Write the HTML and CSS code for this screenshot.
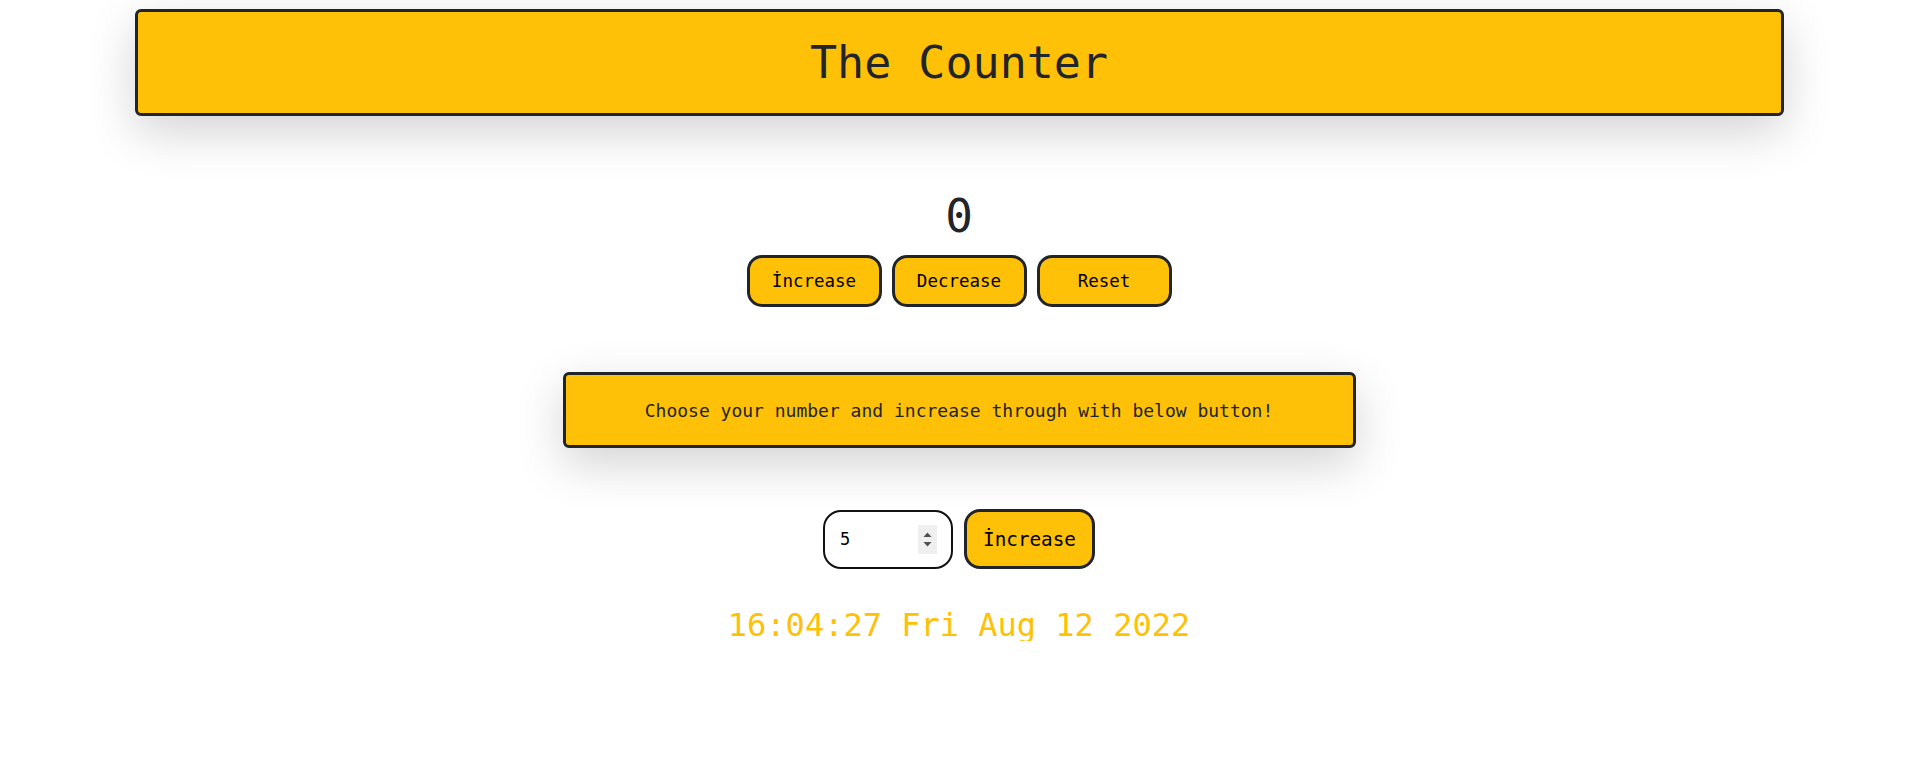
FILE: index.html
```html
<!DOCTYPE html>
<html lang="en">
<head>
<meta charset="utf-8">
<title>The Counter</title>
<link rel="stylesheet" href="styles.css">
</head>
<body>
<header class="title-bar">
  <h1 class="title">The Counter</h1>
</header>
<main class="content">
  <div class="count">0</div>
  <div class="btn-row">
    <button class="btn" type="button">İncrease</button>
    <button class="btn" type="button">Decrease</button>
    <button class="btn" type="button">Reset</button>
  </div>
  <div class="message">Choose your number and increase through with below button!</div>
  <div class="step-row">
    <label class="step-field">
      <input class="step-input" type="number" value="5">
      <span class="spinner">
        <svg width="19" height="29" viewBox="0 0 19 29">
          <rect width="19" height="29" fill="#efefef"/>
          <path d="M5.5 12 L9.5 7.5 L13.5 12 Z" fill="#505050"/>
          <path d="M5.5 17 L9.5 21.5 L13.5 17 Z" fill="#505050"/>
        </svg>
      </span>
    </label>
    <button class="btn btn-step" type="button">İncrease</button>
  </div>
  <div class="clock">16:04:27 Fri Aug 12 2022</div>
</main>
</body>
</html>
```
FILE: styles.css
```css
* { box-sizing: border-box; }

html, body {
  margin: 0;
  background: #ffffff;
}

body {
  padding-top: 9px;
  font-family: "DejaVu Sans Mono", "Liberation Mono", monospace;
  color: #212529;
}

.title-bar {
  width: 1649px;
  margin: 0 auto;
  background: #ffc107;
  border: 3px solid #212529;
  border-radius: 6px;
  padding: 28px 0;
  box-shadow: 0 16px 48px rgba(0, 0, 0, 0.175);
}

.title {
  margin: 0;
  font-size: 45px;
  line-height: 45px;
  font-weight: normal;
  text-align: center;
  color: #212529;
}

.content {
  display: flex;
  flex-direction: column;
  align-items: center;
}

.count {
  margin-top: 77px;
  font-size: 46px;
  line-height: 46px;
  color: #212529;
}

.btn-row {
  margin-top: 16px;
  display: flex;
  gap: 10px;
}

.btn {
  width: 135px;
  height: 52px;
  background: #ffc107;
  border: 3px solid #212529;
  border-radius: 15px;
  font-family: "DejaVu Sans Mono", "Liberation Mono", monospace;
  font-size: 17.5px;
  color: #000;
  padding: 0;
  cursor: pointer;
}

.message {
  margin-top: 65px;
  width: 793px;
  height: 76px;
  display: flex;
  align-items: center;
  justify-content: center;
  background: #ffc107;
  border: 3px solid #212529;
  border-radius: 6px;
  font-size: 18px;
  color: #212529;
  box-shadow: 0 16px 48px rgba(0, 0, 0, 0.175);
}

.step-row {
  margin-top: 61px;
  display: flex;
  align-items: center;
  gap: 11px;
}

.step-field {
  width: 130px;
  height: 59px;
  display: flex;
  align-items: center;
  border: 2px solid #111;
  border-radius: 18px;
  padding: 0 14px 0 15px;
  background: #fff;
}

.step-input {
  flex: 1;
  min-width: 0;
  border: none;
  padding: 0;
  font-family: "DejaVu Sans Mono", "Liberation Mono", monospace;
  font-size: 17px;
  color: #000;
  background: transparent;
  outline: none;
  -moz-appearance: textfield;
}

.step-input::-webkit-inner-spin-button,
.step-input::-webkit-outer-spin-button {
  -webkit-appearance: none;
  margin: 0;
}

.spinner {
  display: flex;
  flex: none;
}

.btn-step {
  width: 131px;
  height: 60px;
  border-radius: 16px;
  font-size: 19.3px;
}

.clock {
  margin-top: 40px;
  font-size: 32px;
  line-height: 32px;
  color: #ffc107;
}
```
